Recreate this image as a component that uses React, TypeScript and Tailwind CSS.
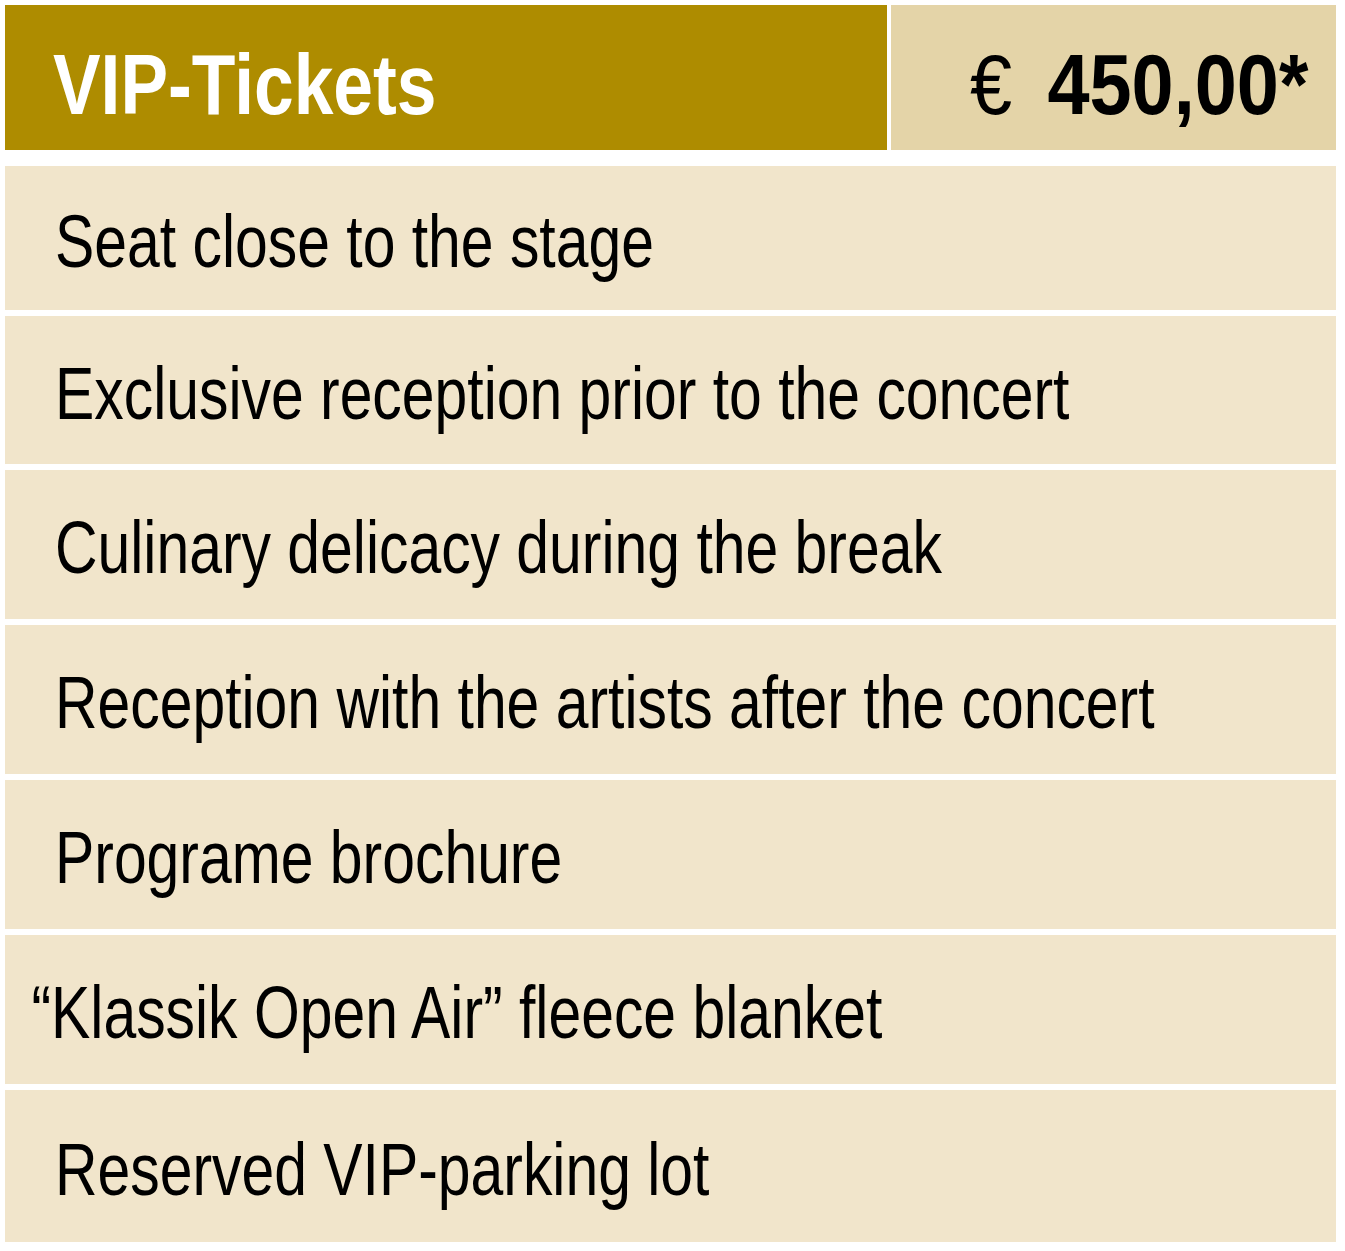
const features = [
  { text: "Seat close to the stage", h: "h-[144px]" },
  { text: "Exclusive reception prior to the concert", h: "h-[148px]" },
  { text: "Culinary delicacy during the break", h: "h-[149px]" },
  { text: "Reception with the artists after the concert", h: "h-[149px]" },
  { text: "Programe brochure", h: "h-[149px]" },
  { text: "Klassik Open Air” fleece blanket", h: "h-[149px]", quote: true },
  { text: "Reserved VIP-parking lot", h: "h-[152px]" },
];

function FeatureRow({ text, h, quote }: { text: string; h: string; quote?: boolean }) {
  return (
    <div className={`${h} flex items-center bg-[#f1e5cb] pl-[50px] pt-[6px]`}>
      <span className="inline-block origin-left scale-x-[0.785] whitespace-nowrap text-[75px] leading-none text-black">
        {quote && <span className="-ml-[30px]">“</span>}
        {text}
      </span>
    </div>
  );
}

export default function App() {
  return (
    <div className="min-h-screen bg-white pl-[5px] pt-[5px] font-['Liberation_Sans',Arial,sans-serif]">
      <div className="flex w-[1331px] flex-col">
        <div className="flex h-[145px] gap-[4px]">
          <div className="flex w-[882px] items-center bg-[#ae8c00] pl-[48px] pt-[13px]">
            <span className="inline-block origin-left scale-x-[0.83] whitespace-nowrap text-[86px] font-bold leading-none text-white">
              VIP-Tickets
            </span>
          </div>
          <div className="flex flex-1 items-center justify-end bg-[#e4d4a8] pr-[28px] pt-[13px]">
            <span className="inline-block origin-right scale-x-[0.88] whitespace-nowrap text-[86px] leading-none text-black">
              <span className="mr-[40px]">€</span>
              <span className="font-bold">450,00*</span>
            </span>
          </div>
        </div>
        <div className="mt-[16px] flex flex-col gap-[6px]">
          {features.map((f) => (
            <FeatureRow key={f.text} text={f.text} h={f.h} quote={f.quote} />
          ))}
        </div>
      </div>
    </div>
  );
}
